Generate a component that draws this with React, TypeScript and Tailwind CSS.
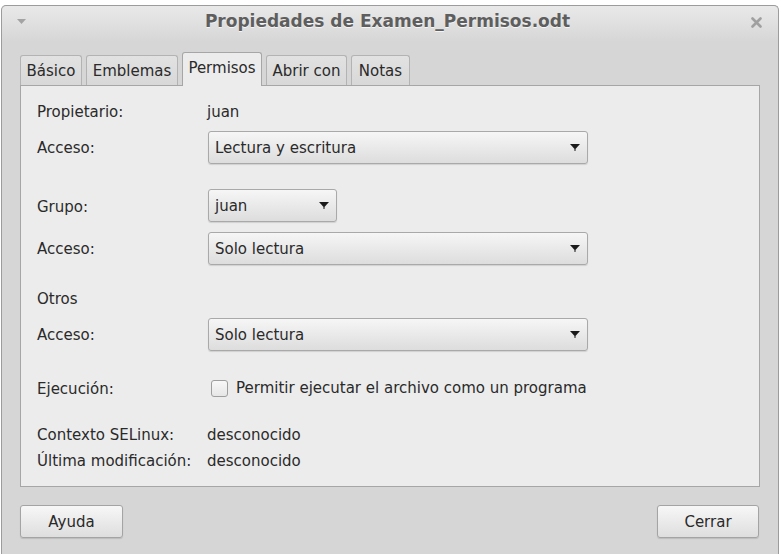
import React from "react";

const FONT = { fontFamily: '"DejaVu Sans", "Liberation Sans", sans-serif' };

function Arrow() {
  return (
    <svg width="10" height="7" viewBox="0 0 10 7" className="shrink-0">
      <polygon points="0,0 10,0 5,5.5" fill="#1a1a1a" />
      <rect x="4.5" y="5" width="1" height="2" fill="#1a1a1a" />
    </svg>
  );
}

function Combo({ text, w }: { text: string; w: string }) {
  return (
    <div
      className={`${w} h-[33px] flex items-center justify-between pl-[6px] pr-[7px] rounded-[3px] border border-[#a9a9a9] bg-gradient-to-b from-[#f6f6f6] to-[#dddddd] shadow-[0_1px_1px_rgba(0,0,0,0.12)]`}
    >
      <span className="pt-[2px] text-[15px] text-[#2a2a2a]">{text}</span>
      <Arrow />
    </div>
  );
}

function Label({ children }: { children: React.ReactNode }) {
  return <div className="w-[171px] shrink-0 pt-[2px] text-[15px] text-[#2a2a2a]">{children}</div>;
}

function Tab({ label, w, active }: { label: string; w: string; active?: boolean }) {
  if (active) {
    return (
      <div
        className={`${w} h-[34px] -mb-px flex items-center justify-center rounded-t-[3px] border border-b-0 border-[#a6a6a6] bg-[#ececec] relative z-10 text-[15px] text-[#2a2a2a] pb-[3px]`}
      >
        {label}
      </div>
    );
  }
  return (
    <div
      className={`${w} h-[30px] flex items-center justify-center rounded-t-[3px] border border-b-0 border-[#b3b3b3] bg-gradient-to-b from-[#e2e2e2] to-[#d8d8d8] text-[15px] text-[#2a2a2a] pt-[2px]`}
    >
      {label}
    </div>
  );
}

export default function App() {
  return (
    <div className="w-[781px] h-[554px] bg-white overflow-hidden" style={FONT}>
      <div className="ml-[1px] mt-[5px] w-[778px] h-[549px] rounded-t-[5px] border border-b-0 border-[#9c9c9c] bg-[#d6d6d6] flex flex-col">
        {/* Title bar */}
        <div className="h-[36px] shrink-0 flex items-center pl-[13px] pr-[16px] pb-[4px] rounded-t-[5px] bg-gradient-to-b from-[#e9e9e9] to-[#d6d6d6]">
          <div className="w-[12px] flex justify-center">
            <svg width="9" height="6" viewBox="0 0 9 6">
              <polygon points="0,0 9,0 4.5,5" fill="#a3a3a3" />
            </svg>
          </div>
          <div className="flex-1 text-center text-[17px] font-bold text-[#5e5e5e] [text-shadow:0_1px_0_#f4f4f4] pr-[2px]">
            Propiedades de Examen_Permisos.odt
          </div>
          <div className="w-[12px] flex justify-center">
            <svg width="11" height="11" viewBox="0 0 11 11">
              <path d="M1.5 1.5 L9.5 9.5 M9.5 1.5 L1.5 9.5" stroke="#a0a0a0" strokeWidth="2.6" strokeLinecap="round" />
            </svg>
          </div>
        </div>

        {/* Tabs + panel */}
        <div className="pl-[18px] pr-[18px] pt-[10px]">
          <div className="flex items-end gap-[4px]">
            <Tab label="Básico" w="w-[62px]" />
            <Tab label="Emblemas" w="w-[92px]" />
            <Tab label="Permisos" w="w-[80px]" active />
            <Tab label="Abrir con" w="w-[81px]" />
            <Tab label="Notas" w="w-[59px]" />
          </div>
          <div className="w-[740px] h-[402px] border border-[#a6a6a6] bg-[#ececec] pl-[16px] flex flex-col">
            <div className="mt-[14px] h-[22px] flex items-center">
              <Label>Propietario:</Label>
              <span className="pt-[2px] text-[15px] text-[#2a2a2a] -ml-[1px]">juan</span>
            </div>
            <div className="mt-[9px] flex items-center">
              <Label>Acceso:</Label>
              <Combo text="Lectura y escritura" w="w-[380px]" />
            </div>
            <div className="mt-[25px] flex items-center">
              <Label>
                <span className="pt-[2px] block">Grupo:</span>
              </Label>
              <Combo text="juan" w="w-[129px]" />
            </div>
            <div className="mt-[10px] flex items-center">
              <Label>Acceso:</Label>
              <Combo text="Solo lectura" w="w-[380px]" />
            </div>
            <div className="mt-[22px] h-[22px] flex items-center">
              <Label>Otros</Label>
            </div>
            <div className="mt-[9px] flex items-center">
              <Label>Acceso:</Label>
              <Combo text="Solo lectura" w="w-[380px]" />
            </div>
            <div className="mt-[26px] h-[22px] flex items-center">
              <Label>Ejecución:</Label>
              <div className="ml-[3px] w-[17px] h-[17px] rounded-[3px] border border-[#9e9e9e] bg-gradient-to-b from-[#f8f8f8] to-[#e6e6e6]" />
              <span className="ml-[8px] text-[15px] text-[#2a2a2a]">
                Permitir ejecutar el archivo como un programa
              </span>
            </div>
            <div className="mt-[24px] h-[22px] flex items-center">
              <Label>Contexto SELinux:</Label>
              <span className="pt-[2px] text-[15px] text-[#2a2a2a] -ml-[1px]">desconocido</span>
            </div>
            <div className="mt-[4px] h-[22px] flex items-center">
              <Label>Última modificación:</Label>
              <span className="pt-[2px] text-[15px] text-[#2a2a2a] -ml-[1px]">desconocido</span>
            </div>
          </div>
          <div className="mt-[18px] flex justify-between">
            <button className="w-[103px] h-[33px] rounded-[3px] border border-[#a4a4a4] bg-gradient-to-b from-[#f7f7f7] to-[#dedede] shadow-[0_1px_1px_rgba(0,0,0,0.12)] text-[15px] text-[#2a2a2a] pt-[1px]">
              Ayuda
            </button>
            <button className="mr-[1px] w-[102px] h-[33px] rounded-[3px] border border-[#a4a4a4] bg-gradient-to-b from-[#f7f7f7] to-[#dedede] shadow-[0_1px_1px_rgba(0,0,0,0.12)] text-[15px] text-[#2a2a2a] pt-[1px]">
              Cerrar
            </button>
          </div>
        </div>
      </div>
    </div>
  );
}
